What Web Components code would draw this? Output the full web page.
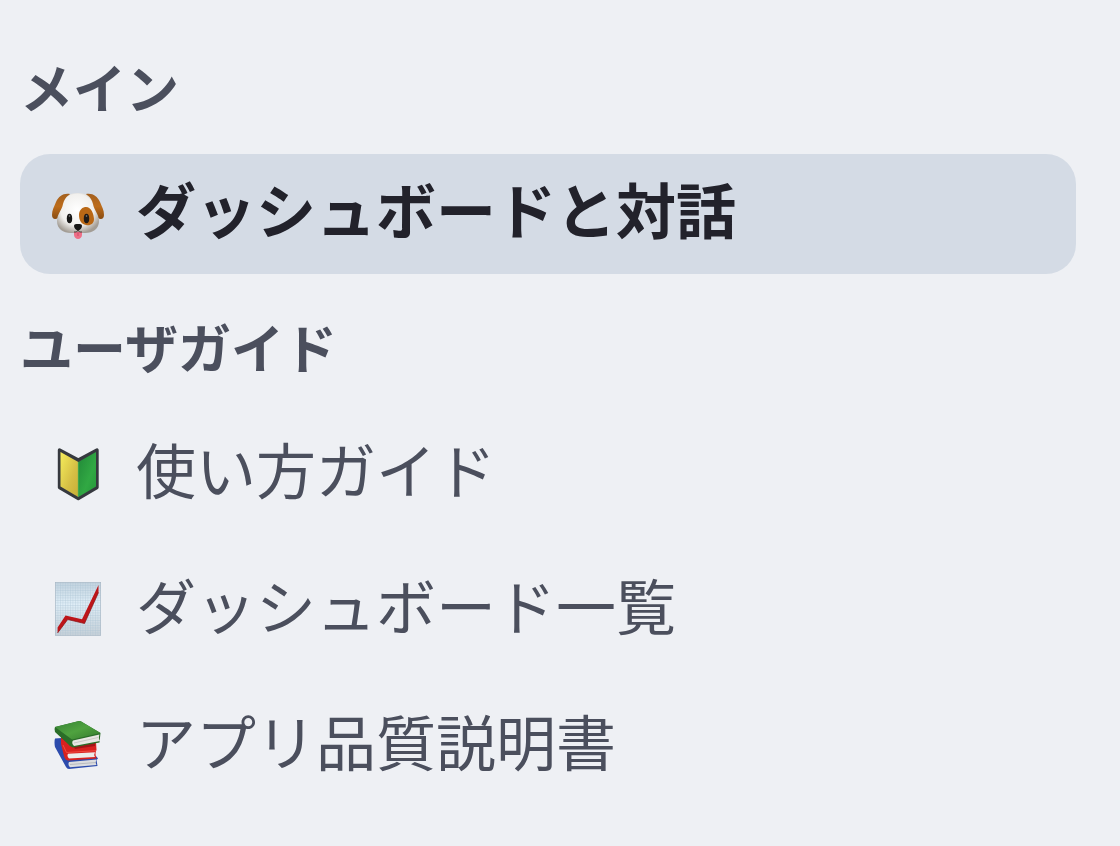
<!DOCTYPE html>
<html lang="ja">
<head>
<meta charset="utf-8">
<meta name="viewport" content="width=device-width, initial-scale=1">
<title>ダッシュボードと対話</title>
<style>
  body {
    margin: 0;
    background: #eef0f4;
    color: #4b4f5d;
    font-family: "Noto Sans CJK JP", "Liberation Sans", sans-serif;
  }
</style>
</head>
<body>
<side-nav>
  <nav-section heading="メイン">
    <nav-item href="#dashboard" icon="dog" active>ダッシュボードと対話</nav-item>
  </nav-section>
  <nav-section heading="ユーザガイド">
    <nav-item href="#guide" icon="beginner">使い方ガイド</nav-item>
    <nav-item href="#list" icon="chart">ダッシュボード一覧</nav-item>
    <nav-item href="#quality" icon="books">アプリ品質説明書</nav-item>
  </nav-section>
</side-nav>

<script>
// アイコン（56x56 の SVG）
const ICONS = {
  dog: `
    <defs>
      <radialGradient id="face" cx=".48" cy=".42" r=".6">
        <stop offset="0" stop-color="#fff"/><stop offset=".65" stop-color="#f1f0ee"/><stop offset="1" stop-color="#a39d95"/>
      </radialGradient>
      <linearGradient id="ear" x1="0" y1="0" x2="0" y2="1">
        <stop offset="0" stop-color="#a3601f"/><stop offset=".5" stop-color="#bd6c1a"/><stop offset="1" stop-color="#894c12"/>
      </linearGradient>
    </defs>
    <path d="M20 8C13 7 9 10 6 16C4 21 2 24 2 29C2 33 5 34 8 32L13 26L18 12Z" fill="url(#ear)"/>
    <path d="M36 8C43 7 47 10 50 16C52 21 54 24 54 29C54 33 51 34 48 32L43 26L38 12Z" fill="url(#ear)"/>
    <path d="M28 7C20 7 15 10 13 18C12 24 7 28 7 35C7 43 13 47 21 47H35C43 47 49 43 49 35C49 28 44 24 43 18C41 10 36 7 28 7Z" fill="url(#face)"/>
    <path d="M35 21C41 20 44 28 44 33C44 38 40 40 36 39C31 38 29 34 29 29C29 25 31 22 35 21Z" fill="#b96816"/>
    <ellipse cx="19.500" cy="32.500" rx="2.700" ry="4.800" fill="#171717"/>
    <ellipse cx="36.500" cy="32.500" rx="2.700" ry="4.800" fill="#211b17"/>
    <circle cx="19.500" cy="30" r=".8" fill="#8b8b8b"/>
    <circle cx="36.500" cy="30" r=".8" fill="#8b8b8b"/>
    <path d="M24 46H32V49C32 51 30 53 28 53S24 51 24 49Z" fill="#ee6f87"/>
    <path d="M28 46V50" stroke="#cf4c68" stroke-width="1"/>
    <path d="M24 40C24 38 26 38 28 38S32 38 32 40C32 42 30 44 28 45C26 44 24 42 24 40Z" fill="#161616"/>
    <path d="M24 46Q27 47 28 44Q29 47 32 46" fill="none" stroke="#4a3c38" stroke-width="1"/>`,
  beginner: `
    <defs>
      <linearGradient id="yel" x1="0" y1="0" x2="1" y2="1">
        <stop offset="0" stop-color="#f5ec5b"/><stop offset=".6" stop-color="#d5bf45"/><stop offset="1" stop-color="#c8ae36"/>
      </linearGradient>
      <linearGradient id="grn" x1="0" y1="0" x2="1" y2="1">
        <stop offset="0" stop-color="#218838"/><stop offset=".6" stop-color="#31a843"/><stop offset="1" stop-color="#25983a"/>
      </linearGradient>
    </defs>
    <g transform="translate(0 -2)">
      <path d="M9.500 6L28.300 16L47 6V43.500L28.300 54.500L9.500 43.500Z" fill="#36393f" stroke="#36393f" stroke-width="3.400" stroke-linejoin="round"/>
      <path d="M10.500 8L28.300 18V53L10.500 42.500Z" fill="url(#yel)"/>
      <path d="M46 8L28.300 18V53L46 42.500Z" fill="url(#grn)"/>
      <path d="M28.300 18V53" stroke="#49bd58" stroke-width=".7"/>
    </g>`,
  chart: `
    <defs>
      <linearGradient id="paper" x1="0" y1="0" x2="0" y2="1">
        <stop offset="0" stop-color="#c3d3df"/><stop offset=".4" stop-color="#e0eef7"/><stop offset="1" stop-color="#c6d0d8"/>
      </linearGradient>
      <pattern id="grid" width="2.500" height="2.500" patternUnits="userSpaceOnUse">
        <path d="M0 0H2.500M0 0V2.500" stroke="#a9c2d3" stroke-width=".6"/>
      </pattern>
    </defs>
    <g transform="translate(0 -2)">
      <rect x="5.300" y="2.300" width="45.400" height="53.200" fill="url(#paper)"/>
      <rect x="5.300" y="2.300" width="45.400" height="53.200" fill="url(#grid)" stroke="#a7b6c3" stroke-width=".6"/>
      <path d="M7.600 47.500L15.500 35.500L32 39.300L48.500 5V12.500L34.500 43.500L17.700 39.500L7.600 53Z" fill="#bd1519"/>
      <path d="M7.600 53L17.700 39.500L34.500 43.500L48.500 12.500" fill="none" stroke="#8a1013" stroke-width=".7"/>
    </g>`,
  books: `
    <defs>
      <linearGradient id="cover" x1="0" y1="0" x2="1" y2="1">
        <stop offset="0" stop-color="#358234"/><stop offset=".5" stop-color="#4fa23f"/><stop offset="1" stop-color="#32792c"/>
      </linearGradient>
    </defs>
    <g transform="translate(0 -2)">
      <path d="M5 22.500L12 22L18 42L46.500 40.500L48 42.500L46.500 44L47.500 50L19 53Q17 53 16 51L5 31Q4 26 5 22.500Z" fill="#2c4bac"/>
      <path d="M19 46L46.500 43.500Q45 46.500 46.500 49L20 51.300Q17.500 48.500 19 46Z" fill="#dcdddf"/>
      <path d="M20 48.500L46 46.500" stroke="#9ea3aa" stroke-width=".6"/>
      <path d="M11 20L46 26L46.500 34Q44.500 37 46.500 42.500L18 44.500Q15 44 14 40L11 28Z" fill="#d8211f"/>
      <path d="M18 37.700L45 36.200Q43.500 38.500 45 41L19 42.500Q16.500 40 18 37.700Z" fill="#ececea"/>
      <path d="M13 29L16.500 36.500L46 34.700" fill="none" stroke="#f04a40" stroke-width="1"/>
      <path d="M24 31L45 26V30L25 33Z" fill="#a21517"/>
      <path d="M5 11L29 5Q31 5 32 6L50.500 17L49.500 26.500L23 31.500Q20 31 18 28L5 16Q4 13 5 11Z" fill="#2a6d28"/>
      <path d="M23 24.500L49.500 18.500Q48 22 50 25L24 30Q21 27 23 24.500Z" fill="#e7e7e3"/>
      <path d="M24 27L48 21.500" stroke="#b4b5b0" stroke-width=".6"/>
      <path d="M5 11L29 5Q31 5 32 6L50.500 17L22 23.500Z" fill="url(#cover)"/>
    </g>`,
};

// ナビゲーション全体
class SideNav extends HTMLElement {
  constructor() {
    super();
    this.attachShadow({ mode: "open" }).innerHTML = `
      <style>
        :host { display: block; }
        nav { display: flex; flex-direction: column; gap: 36px; padding: 50px 44px 40px 20px; }
      </style>
      <nav aria-label="メニュー"><slot></slot></nav>
    `;
  }
}

// 見出し付きのグループ
class NavSection extends HTMLElement {
  constructor() {
    super();
    this.attachShadow({ mode: "open" }).innerHTML = `
      <style>
        :host { display: block; }
        h2 { margin: 0 0 32px; font-size: 53px; line-height: 72px; font-weight: 700; }
        .items { display: flex; flex-direction: column; gap: 16px; }
      </style>
      <h2></h2>
      <div class="items"><slot></slot></div>
    `;
    this.shadowRoot.querySelector("h2").textContent = this.getAttribute("heading") || "";
  }
}

// リンク1件（active で選択中の表示）
class NavItem extends HTMLElement {
  constructor() {
    super();
    this.attachShadow({ mode: "open" }).innerHTML = `
      <style>
        :host { display: block; }
        a {
          display: flex; align-items: center; gap: 30px;
          padding: 16px 30px; border-radius: 30px;
          color: inherit; text-decoration: none;
          font-size: 60px; line-height: 76px; white-space: nowrap;
        }
        a:hover { background: #e2e6ed; }
        svg { flex: none; width: 56px; height: 56px; overflow: visible; }
        .label { padding-bottom: 12px; }
        :host([active]) a { background: #d4dbe5; color: #22222b; font-weight: 700; }
      </style>
      <a>
        <svg viewBox="0 0 56 56" aria-hidden="true">${ICONS[this.getAttribute("icon")] || ""}</svg>
        <span class="label"><slot></slot></span>
      </a>
    `;
    const link = this.shadowRoot.querySelector("a");
    link.href = this.getAttribute("href") || "#";
    if (this.hasAttribute("active")) link.setAttribute("aria-current", "page");
  }
}

customElements.define("side-nav", SideNav);
customElements.define("nav-section", NavSection);
customElements.define("nav-item", NavItem);
</script>
</body>
</html>
